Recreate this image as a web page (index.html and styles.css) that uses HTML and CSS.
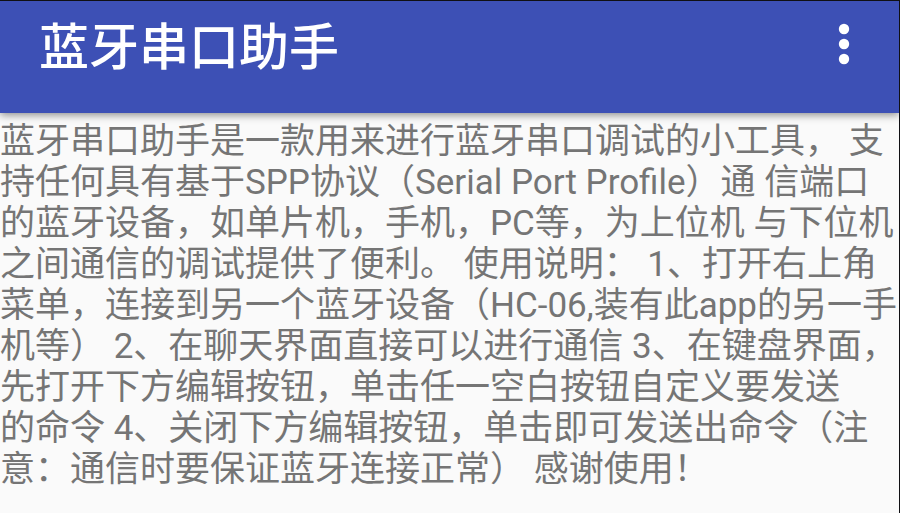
FILE: index.html
```html
<!DOCTYPE html>
<html lang="zh-CN">
<head>
<meta charset="utf-8">
<meta name="viewport" content="width=device-width, initial-scale=1">
<title>蓝牙串口助手</title>
<link rel="stylesheet" href="styles.css">
</head>
<body>
<header class="app-bar">
  <h1 class="title">蓝牙串口助手</h1>
  <button class="menu" type="button" aria-label="更多选项">
    <svg class="dots" viewBox="0 0 12 40" aria-hidden="true"><circle cx="6" cy="5" r="5.2"/><circle cx="6" cy="20" r="5.2"/><circle cx="6" cy="35" r="5.2"/></svg>
  </button>
</header>
<main>
  <p class="about">蓝牙串口助手是一款用来进行蓝牙串口调试的小工具， 支<br>持任何具有基于SPP协议（Serial Port Profile）通 信端口<br>的蓝牙设备，如单片机，手机，PC等，为上位机 与下位机<br>之间通信的调试提供了便利。 使用说明： 1、打开右上角<br>菜单，连接到另一个蓝牙设备（HC-06,装有此app的另一手<br>机等） 2、在聊天界面直接可以进行通信 3、在键盘界面，<br>先打开下方编辑按钮，单击任一空白按钮自定义要发送<br>的命令 4、关闭下方编辑按钮，单击即可发送出命令（注<br>意：通信时要保证蓝牙连接正常） 感谢使用！</p>
</main>
</body>
</html>
```

FILE: styles.css
```css
* { box-sizing: border-box; }

body {
  margin: 0;
  min-height: 100vh;
  background: #fafafa;
  border-top: 1px solid #101014;
  border-right: 1px solid #101014;
  font-family: Roboto, "Noto Sans CJK SC", sans-serif;
}

.app-bar {
  display: flex;
  align-items: flex-start;
  justify-content: space-between;
  padding: 11px 39px 29px;
  background: #3d50b5;
  color: #fff;
  box-shadow: 0 2px 8px rgba(0, 0, 0, 0.45);
}

.title {
  margin: 0;
  font-size: 50px;
  line-height: 72px;
  font-weight: 500;
}

.menu {
  display: flex;
  padding: 12px 10px;
  border: 0;
  background: none;
  color: inherit;
}

.dots {
  width: 12px;
  height: 40px;
  overflow: visible;
  fill: currentColor;
}

.about {
  margin: 0;
  padding-top: 8px;
  color: #757575;
  font-size: 35px;
  line-height: 41px;
  white-space: nowrap;
}
```
